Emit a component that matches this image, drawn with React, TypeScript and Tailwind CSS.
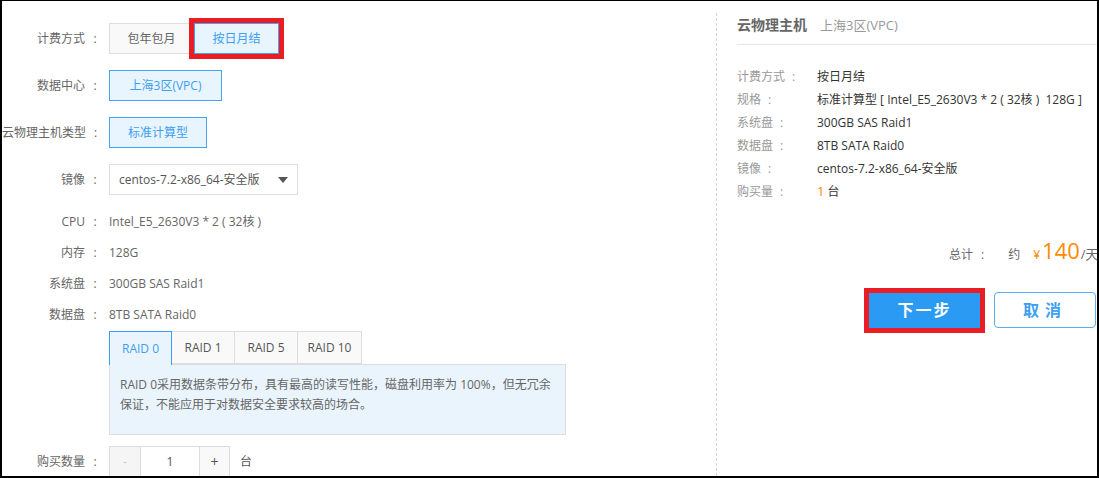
import React from "react";

const FONT = { fontFamily: '"Open Sans", "Noto Sans CJK SC", sans-serif' };

function Label({ text }: { text: string }) {
  return (
    <div className="w-[107px] shrink-0 pr-[4px] flex justify-end items-center whitespace-nowrap text-[#666]">
      <span>{text}</span>
      <span className="w-[20px] text-center">:</span>
    </div>
  );
}

function InfoRow({ label, value }: { label: string; value: React.ReactNode }) {
  return (
    <div className="flex items-center h-[31px]">
      <Label text={label} />
      <div className="text-[#666] whitespace-nowrap">{value}</div>
    </div>
  );
}

function SideRow({ label, value }: { label: string; value: React.ReactNode }) {
  return (
    <div className="flex items-center h-[23px] leading-[23px]">
      <div className="w-[80px] shrink-0 text-[#999] whitespace-nowrap">
        <span>{label}</span>
        <span className="ml-[7px]">:</span>
      </div>
      <div className="text-[#333] whitespace-pre">{value}</div>
    </div>
  );
}

export default function App() {
  return (
    <div
      className="w-[1099px] h-[478px] bg-white border-t border-l-2 border-r-2 border-b-2 border-black overflow-hidden flex text-[12px] leading-none"
      style={FONT}
    >
      {/* Left panel */}
      <div className="w-[714px] shrink-0 flex flex-col pt-[22px]">
        {/* Billing */}
        <div className="flex items-center h-[31px]">
          <Label text="计费方式" />
          <div className="flex h-[31px]">
            <button className="w-[85px] h-[31px] bg-[#f9f9f9] border border-[#dddddd] text-[#666]">
              包年包月
            </button>
            <button className="w-[85px] h-[31px] bg-[#e8f4fe] border border-[#45a3f2] text-[#3d9ff0] outline-[5px] outline-solid outline-[#ea1c24] relative">
              按日月结
            </button>
          </div>
        </div>

        <div className="flex items-center h-[31px] mt-[16px]">
          <Label text="数据中心" />
          <button className="h-[31px] w-[113px] bg-[#e8f4fe] border border-[#45a3f2] text-[#3d9ff0]">
            上海3区(VPC)
          </button>
        </div>

        <div className="flex items-center h-[31px] mt-[16px]">
          <Label text="云物理主机类型" />
          <button className="h-[31px] w-[98px] bg-[#e8f4fe] border border-[#45a3f2] text-[#3d9ff0]">
            标准计算型
          </button>
        </div>

        <div className="flex items-center h-[31px] mt-[16px]">
          <Label text="镜像" />
          <div className="w-[189px] h-[31px] border border-[#dddddd] flex items-center justify-between pl-[9px] pr-[9px] text-[#555]">
            <span>centos-7.2-x86_64-安全版</span>
            <svg width="10" height="6" viewBox="0 0 10 6">
              <path d="M0 0 L10 0 L5 6 Z" fill="#555" />
            </svg>
          </div>
        </div>

        <div className="mt-[11px]">
          <InfoRow label="CPU" value="Intel_E5_2630V3 * 2 ( 32核 )" />
          <InfoRow label="内存" value="128G" />
          <InfoRow label="系统盘" value="300GB SAS Raid1" />
          <InfoRow label="数据盘" value="8TB SATA Raid0" />
        </div>

        {/* Tabs */}
        <div className="ml-[107px] mt-[1px] w-[457px]">
          <div className="flex h-[33px]">
            <div className="w-[63px] h-[34px] bg-[#eaf4fd] border border-b-0 border-[#3c9ef0] text-[#3d9ff0] flex items-center justify-center relative z-10">
              RAID 0
            </div>
            <div className="w-[63px] h-[33px] bg-[#f9f9f9] border border-l-0 border-[#dddddd] text-[#555] flex items-center justify-center">
              RAID 1
            </div>
            <div className="w-[63px] h-[33px] bg-[#f9f9f9] border border-l-0 border-[#dddddd] text-[#555] flex items-center justify-center">
              RAID 5
            </div>
            <div className="w-[64px] h-[33px] bg-[#f9f9f9] border border-l-0 border-[#dddddd] text-[#555] flex items-center justify-center">
              RAID 10
            </div>
          </div>
          <div className="h-[71px] bg-[#eaf4fd] border border-[#dddddd] pl-[10px] pr-[4px] pt-[10px] text-[#666] leading-[20px] whitespace-nowrap">
            RAID 0采用数据条带分布，具有最高的读写性能，磁盘利用率为 100%，但无冗余
            <br />
            保证，不能应用于对数据安全要求较高的场合。
          </div>
        </div>

        {/* Quantity */}
        <div className="flex items-center h-[31px] mt-[11px]">
          <Label text="购买数量" />
          <div className="flex h-[31px] border border-[#dddddd]">
            <div className="w-[31px] bg-[#f5f5f5] text-[#ccc] flex items-center justify-center border-r border-[#dddddd]">
              -
            </div>
            <div className="w-[59px] bg-white text-[#555] flex items-center justify-center border-r border-[#dddddd]">
              1
            </div>
            <div className="w-[29px] bg-[#f9f9f9] text-[#555] flex items-center justify-center text-[14px]">
              +
            </div>
          </div>
          <span className="ml-[10px] text-[#555]">台</span>
        </div>
      </div>

      {/* Right panel */}
      <div className="flex-1 mt-[12px] border-l border-dashed border-[#d4d4d4] pl-[20px] flex flex-col">
        <div className="flex items-center leading-[24px] h-[32px] pb-[8px] border-b border-[#e5e5e5] whitespace-nowrap">
          <span className="text-[14px] font-bold text-[#666]">云物理主机</span>
          <span className="ml-[13px] text-[13px] text-[#999]">上海3区(VPC)</span>
        </div>

        <div className="mt-[20px]">
          <SideRow label="计费方式" value="按日月结" />
          <SideRow label="规格" value="标准计算型 [ Intel_E5_2630V3 * 2 ( 32核 )  128G ]" />
          <SideRow label="系统盘" value="300GB SAS Raid1" />
          <SideRow label="数据盘" value="8TB SATA Raid0" />
          <SideRow label="镜像" value="centos-7.2-x86_64-安全版" />
          <SideRow
            label="购买量"
            value={
              <span>
                <span className="text-[#ff8a00] text-[13px]">1</span> 台
              </span>
            }
          />
        </div>

        <div className="mt-[32px] h-[30px] pl-[212px] flex items-baseline whitespace-nowrap leading-[30px]">
          <span className="text-[#666]">总计</span>
          <span className="ml-[8px] text-[#666]">:</span>
          <span className="ml-[24px] text-[#666]">约</span>
          <span className="ml-[13px] text-[#ff8a00]">¥</span>
          <span className="ml-[2px] text-[#ff8a00] text-[22px]">140</span>
          <span className="ml-[1px] text-[#666] text-[13px]">/天</span>
        </div>

        <div className="mt-[27px] pl-[132px] flex items-center">
          <button className="w-[111px] h-[35px] bg-[#2b9af3] text-white text-[16px] font-bold tracking-[2px] outline-[5px] outline-solid outline-[#ea1c24]">
            下一步
          </button>
          <button className="ml-[14px] w-[102px] h-[36px] bg-white border border-[#5aabf1] rounded-[4px] text-[#3d9ff0] text-[16px] font-bold tracking-[6px]">
            取消
          </button>
        </div>
      </div>
    </div>
  );
}
